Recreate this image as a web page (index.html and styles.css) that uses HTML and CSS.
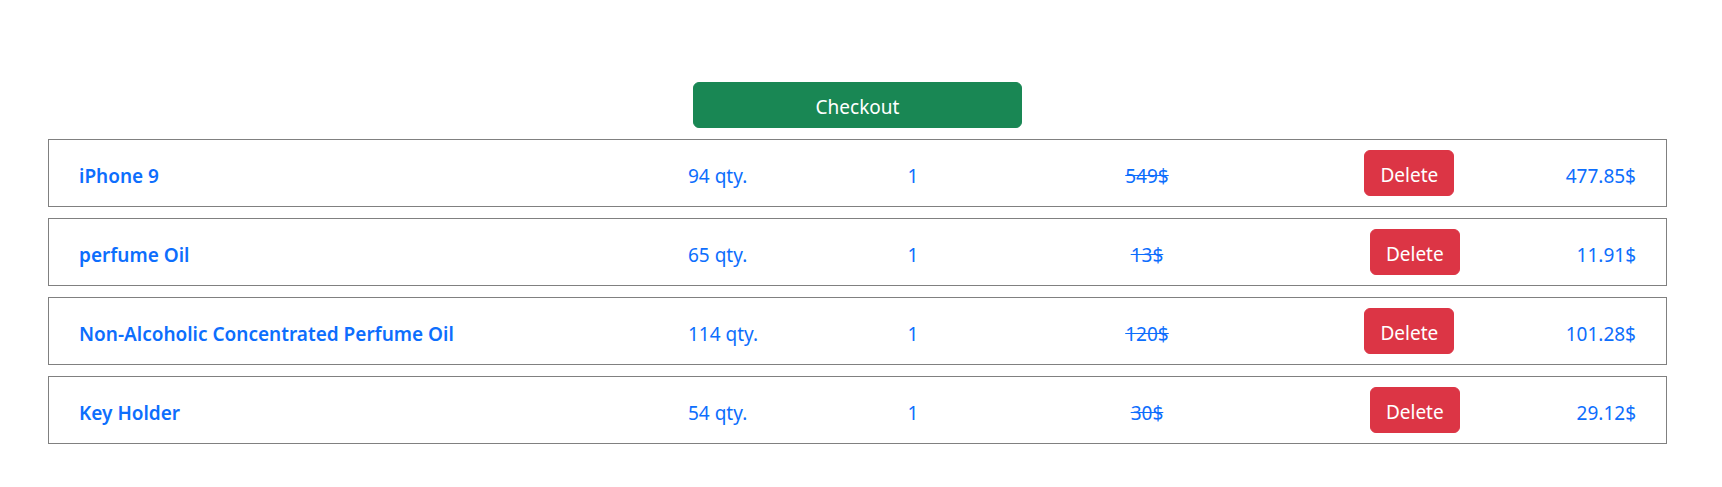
FILE: index.html
```html
<!DOCTYPE html>
<html lang="en">
<head>
<meta charset="utf-8">
<title>Cart</title>
<link rel="stylesheet" href="styles.css">
</head>
<body>
<main class="cart">
  <button class="btn btn-checkout" type="button">Checkout</button>

  <div class="item">
    <a class="item-name" href="#">iPhone 9</a>
    <span class="item-stock">94 qty.</span>
    <span class="item-count">1</span>
    <del class="item-price">549$</del>
    <div class="item-action"><button class="btn btn-delete" type="button">Delete</button></div>
    <span class="item-total">477.85$</span>
  </div>

  <div class="item">
    <a class="item-name" href="#">perfume Oil</a>
    <span class="item-stock">65 qty.</span>
    <span class="item-count">1</span>
    <del class="item-price">13$</del>
    <div class="item-action"><button class="btn btn-delete" type="button">Delete</button></div>
    <span class="item-total">11.91$</span>
  </div>

  <div class="item">
    <a class="item-name" href="#">Non-Alcoholic Concentrated Perfume Oil</a>
    <span class="item-stock">114 qty.</span>
    <span class="item-count">1</span>
    <del class="item-price">120$</del>
    <div class="item-action"><button class="btn btn-delete" type="button">Delete</button></div>
    <span class="item-total">101.28$</span>
  </div>

  <div class="item">
    <a class="item-name" href="#">Key Holder</a>
    <span class="item-stock">54 qty.</span>
    <span class="item-count">1</span>
    <del class="item-price">30$</del>
    <div class="item-action"><button class="btn btn-delete" type="button">Delete</button></div>
    <span class="item-total">29.12$</span>
  </div>
</main>
</body>
</html>
```

FILE: styles.css
```css
html, body {
  margin: 0;
  padding: 0;
  background: #ffffff;
}

body {
  font-family: "Noto Sans", "Open Sans", sans-serif;
  font-size: 19px;
  line-height: 28px;
  color: #0d6efd;
}

.cart {
  width: 1619px;
  margin: 82px 0 0 48px;
  display: flex;
  flex-direction: column;
  align-items: center;
  gap: 11px;
}

.btn {
  font-family: inherit;
  font-size: 19px;
  line-height: 28px;
  padding: 10px 15px 6px;
  border: 1px solid transparent;
  border-radius: 6px;
  color: #ffffff;
  cursor: pointer;
}

.btn-checkout {
  width: 329px;
  background: #198754;
  border-color: #198754;
}

.btn-delete {
  background: #dc3545;
  border-color: #dc3545;
}

.item {
  align-self: stretch;
  box-sizing: border-box;
  height: 68px;
  padding: 10px 30px;
  border: 1px solid #808080;
  display: grid;
  grid-template-columns: 609px 150px 150px 318px 1fr auto;
  align-items: center;
}

.item-name,
.item-stock,
.item-count,
.item-price,
.item-total {
  padding-top: 5px;
}

.item-name {
  color: #0d6efd;
  font-weight: 600;
  text-decoration: none;
}

.item-stock {
  text-align: left;
}

.item-count {
  text-align: center;
}

.item-price {
  text-align: center;
}

.item-action {
  display: flex;
  justify-content: center;
  padding-right: 53px;
}

.item-total {
  text-align: right;
}
```
